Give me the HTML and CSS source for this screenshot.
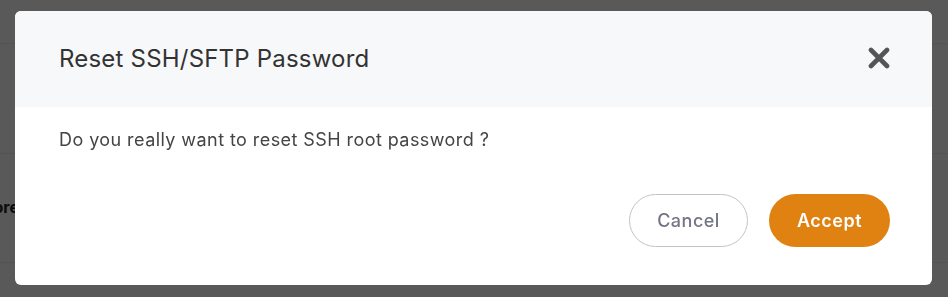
FILE: index.html
```html
<!DOCTYPE html>
<html lang="en">
<head>
<meta charset="utf-8">
<title>Reset SSH/SFTP Password</title>
<link rel="stylesheet" href="styles.css">
</head>
<body>
<div class="page">
  <div class="topbar"></div>
  <div class="row row-a"></div>
  <div class="row row-b"><span class="cell-label">Restore</span></div>
</div>
<div class="overlay"></div>
<div class="modal" role="dialog">
  <div class="modal-header">
    <h2 class="modal-title">Reset SSH/SFTP Password</h2>
    <button class="close-btn" aria-label="Close">
      <svg width="22" height="22" viewBox="0 0 22 22"><path d="M3 3 L19 19 M19 3 L3 19" stroke="#555555" stroke-width="4.6" stroke-linecap="round" fill="none"/></svg>
    </button>
  </div>
  <div class="modal-body">
    <p class="message">Do you really want to reset SSH root password ?</p>
  </div>
  <div class="modal-footer">
    <button class="btn btn-cancel">Cancel</button>
    <button class="btn btn-accept">Accept</button>
  </div>
</div>
</body>
</html>
```
FILE: styles.css
```css
html, body {
  margin: 0;
  padding: 0;
  background: #ffffff;
  font-family: Inter, "Liberation Sans", sans-serif;
  overflow: hidden;
}
.page {
  width: 948px;
  height: 297px;
}
.topbar {
  height: 43px;
  border-bottom: 1px solid #eceef0;
}
.row {
  border-bottom: 1px solid #eceef0;
}
.row-a {
  height: 109px;
}
.row-b {
  height: 108px;
  display: flex;
  align-items: center;
}
.cell-label {
  margin-left: -41px;
  margin-top: -3px;
  font-weight: 700;
  font-size: 16px;
  color: #222;
}
.overlay {
  position: fixed;
  inset: 0;
  background: rgba(0, 0, 0, 0.65);
}
.modal {
  position: fixed;
  left: 15px;
  top: 11px;
  width: 917px;
  height: 274px;
  background: #ffffff;
  border-radius: 6px;
  overflow: hidden;
  display: flex;
  flex-direction: column;
}
.modal-header {
  height: 96px;
  flex: none;
  background: #f7f8fa;
  display: flex;
  align-items: center;
  justify-content: space-between;
  padding: 0 42px 0 44px;
}
.modal-title {
  margin: 0;
  font-size: 24px;
  font-weight: 400;
  color: #333333;
  line-height: 30px;
  letter-spacing: 0.2px;
}
.close-btn {
  border: 0;
  background: none;
  padding: 0;
  width: 22px;
  height: 22px;
  margin-top: -2px;
  display: flex;
}
.modal-body {
  padding: 20px 44px 0 44px;
}
.message {
  margin: 0;
  font-size: 18px;
  line-height: 26px;
  color: #444444;
  letter-spacing: 0.43px;
}
.modal-footer {
  display: flex;
  justify-content: flex-end;
  gap: 21px;
  padding: 41px 42px 0 0;
}
.btn {
  height: 53px;
  border-radius: 27px;
  font-family: Inter, "Liberation Sans", sans-serif;
  font-size: 18px;
  padding: 0;
  letter-spacing: 0.5px;
}
.btn-cancel {
  width: 119px;
  background: #ffffff;
  border: 1px solid #c2c3c9;
  color: #737487;
  font-weight: 500;
}
.btn-accept {
  width: 121px;
  background: #df8212;
  border: 0;
  color: #ffffff;
  font-weight: 600;
}
```
